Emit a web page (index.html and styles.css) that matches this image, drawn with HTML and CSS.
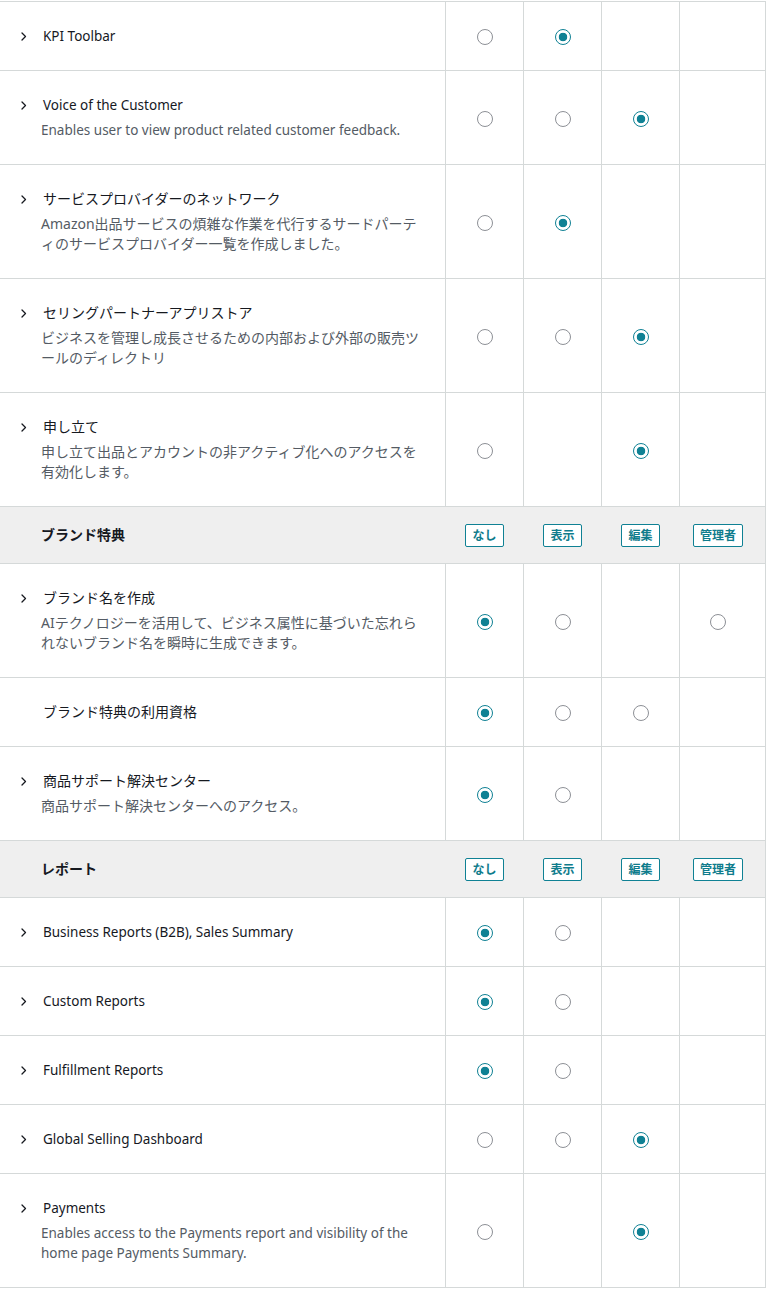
FILE: index.html
```html
<!DOCTYPE html>
<html lang="ja">
<head>
<meta charset="utf-8">
<title>権限</title>
<link rel="stylesheet" href="styles.css">
</head>
<body>
<div class="table">

  <div class="row">
    <div class="cell label"><div class="title"><svg class="chev" viewBox="0 0 6 9"><path d="M1 1 L4.5 4.5 L1 8"/></svg><span lang="en">KPI Toolbar</span></div></div>
    <div class="cell opt"><span class="radio"></span></div>
    <div class="cell opt"><span class="radio on"></span></div>
    <div class="cell opt"></div>
    <div class="cell opt last"></div>
  </div>

  <div class="row">
    <div class="cell label"><div class="title"><svg class="chev" viewBox="0 0 6 9"><path d="M1 1 L4.5 4.5 L1 8"/></svg><span lang="en">Voice of the Customer</span></div><div class="desc" lang="en">Enables user to view product related customer feedback.</div></div>
    <div class="cell opt"><span class="radio"></span></div>
    <div class="cell opt"><span class="radio"></span></div>
    <div class="cell opt"><span class="radio on"></span></div>
    <div class="cell opt last"></div>
  </div>

  <div class="row">
    <div class="cell label"><div class="title"><svg class="chev" viewBox="0 0 6 9"><path d="M1 1 L4.5 4.5 L1 8"/></svg><span>サービスプロバイダーのネットワーク</span></div><div class="desc">Amazon出品サービスの煩雑な作業を代行するサードパーティのサービスプロバイダー一覧を作成しました。</div></div>
    <div class="cell opt"><span class="radio"></span></div>
    <div class="cell opt"><span class="radio on"></span></div>
    <div class="cell opt"></div>
    <div class="cell opt last"></div>
  </div>

  <div class="row">
    <div class="cell label"><div class="title"><svg class="chev" viewBox="0 0 6 9"><path d="M1 1 L4.5 4.5 L1 8"/></svg><span>セリングパートナーアプリストア</span></div><div class="desc">ビジネスを管理し成長させるための内部および外部の販売ツールのディレクトリ</div></div>
    <div class="cell opt"><span class="radio"></span></div>
    <div class="cell opt"><span class="radio"></span></div>
    <div class="cell opt"><span class="radio on"></span></div>
    <div class="cell opt last"></div>
  </div>

  <div class="row">
    <div class="cell label"><div class="title"><svg class="chev" viewBox="0 0 6 9"><path d="M1 1 L4.5 4.5 L1 8"/></svg><span>申し立て</span></div><div class="desc">申し立て出品とアカウントの非アクティブ化へのアクセスを有効化します。</div></div>
    <div class="cell opt"><span class="radio"></span></div>
    <div class="cell opt"></div>
    <div class="cell opt"><span class="radio on"></span></div>
    <div class="cell opt last"></div>
  </div>

  <div class="row head">
    <div class="cell label"><div class="group">ブランド特典</div></div>
    <div class="cell opt"><span class="badge">なし</span></div>
    <div class="cell opt"><span class="badge">表示</span></div>
    <div class="cell opt"><span class="badge">編集</span></div>
    <div class="cell opt last"><span class="badge">管理者</span></div>
  </div>

  <div class="row">
    <div class="cell label"><div class="title"><svg class="chev" viewBox="0 0 6 9"><path d="M1 1 L4.5 4.5 L1 8"/></svg><span>ブランド名を作成</span></div><div class="desc">AIテクノロジーを活用して、ビジネス属性に基づいた忘れられないブランド名を瞬時に生成できます。</div></div>
    <div class="cell opt"><span class="radio on"></span></div>
    <div class="cell opt"><span class="radio"></span></div>
    <div class="cell opt"></div>
    <div class="cell opt last"><span class="radio"></span></div>
  </div>

  <div class="row">
    <div class="cell label"><div class="title plain"><span>ブランド特典の利用資格</span></div></div>
    <div class="cell opt"><span class="radio on"></span></div>
    <div class="cell opt"><span class="radio"></span></div>
    <div class="cell opt"><span class="radio"></span></div>
    <div class="cell opt last"></div>
  </div>

  <div class="row">
    <div class="cell label"><div class="title"><svg class="chev" viewBox="0 0 6 9"><path d="M1 1 L4.5 4.5 L1 8"/></svg><span>商品サポート解決センター</span></div><div class="desc">商品サポート解決センターへのアクセス。</div></div>
    <div class="cell opt"><span class="radio on"></span></div>
    <div class="cell opt"><span class="radio"></span></div>
    <div class="cell opt"></div>
    <div class="cell opt last"></div>
  </div>

  <div class="row head">
    <div class="cell label"><div class="group">レポート</div></div>
    <div class="cell opt"><span class="badge">なし</span></div>
    <div class="cell opt"><span class="badge">表示</span></div>
    <div class="cell opt"><span class="badge">編集</span></div>
    <div class="cell opt last"><span class="badge">管理者</span></div>
  </div>

  <div class="row">
    <div class="cell label"><div class="title"><svg class="chev" viewBox="0 0 6 9"><path d="M1 1 L4.5 4.5 L1 8"/></svg><span lang="en">Business Reports (B2B), Sales Summary</span></div></div>
    <div class="cell opt"><span class="radio on"></span></div>
    <div class="cell opt"><span class="radio"></span></div>
    <div class="cell opt"></div>
    <div class="cell opt last"></div>
  </div>

  <div class="row">
    <div class="cell label"><div class="title"><svg class="chev" viewBox="0 0 6 9"><path d="M1 1 L4.5 4.5 L1 8"/></svg><span lang="en">Custom Reports</span></div></div>
    <div class="cell opt"><span class="radio on"></span></div>
    <div class="cell opt"><span class="radio"></span></div>
    <div class="cell opt"></div>
    <div class="cell opt last"></div>
  </div>

  <div class="row">
    <div class="cell label"><div class="title"><svg class="chev" viewBox="0 0 6 9"><path d="M1 1 L4.5 4.5 L1 8"/></svg><span lang="en">Fulfillment Reports</span></div></div>
    <div class="cell opt"><span class="radio on"></span></div>
    <div class="cell opt"><span class="radio"></span></div>
    <div class="cell opt"></div>
    <div class="cell opt last"></div>
  </div>

  <div class="row">
    <div class="cell label"><div class="title"><svg class="chev" viewBox="0 0 6 9"><path d="M1 1 L4.5 4.5 L1 8"/></svg><span lang="en">Global Selling Dashboard</span></div></div>
    <div class="cell opt"><span class="radio"></span></div>
    <div class="cell opt"><span class="radio"></span></div>
    <div class="cell opt"><span class="radio on"></span></div>
    <div class="cell opt last"></div>
  </div>

  <div class="row">
    <div class="cell label"><div class="title"><svg class="chev" viewBox="0 0 6 9"><path d="M1 1 L4.5 4.5 L1 8"/></svg><span lang="en">Payments</span></div><div class="desc" lang="en">Enables access to the Payments report and visibility of the home page Payments Summary.</div></div>
    <div class="cell opt"><span class="radio"></span></div>
    <div class="cell opt"></div>
    <div class="cell opt"><span class="radio on"></span></div>
    <div class="cell opt last"></div>
  </div>

</div>
</body>
</html>
```

FILE: styles.css
```css
* { box-sizing: border-box; }

html, body {
  margin: 0;
  padding: 0;
  background: #ffffff;
}

body {
  padding-top: 1px;
  font-family: "Noto Sans", "Noto Sans CJK JP", sans-serif;
  font-size: 14px;
  color: #16191f;
}

.table {
  width: 766px;
  border-top: 1px solid #d5d9d9;
}

.row {
  display: grid;
  grid-template-columns: 446px 78px 78px 78px 86px;
  border-bottom: 1px solid #d5d9d9;
}

.cell {
  border-right: 1px solid #d5d9d9;
}

.label {
  padding: 24px 24px 24px 21px;
}

.opt {
  display: flex;
  align-items: center;
  justify-content: center;
  padding-top: 2px;
}

.opt.last {
  padding-right: 9px;
}

.title {
  display: flex;
  align-items: center;
  height: 20px;
  line-height: 20px;
  color: #16191f;
}

.title.plain {
  padding-left: 22px;
}

.chev {
  width: 6px;
  height: 9px;
  margin-right: 16px;
  flex: none;
}

.chev path {
  fill: none;
  stroke: #16191f;
  stroke-width: 1.3;
  stroke-linecap: round;
  stroke-linejoin: round;
}

.desc {
  margin-top: 5px;
  padding-left: 20px;
  line-height: 20px;
  color: #545b64;
}

:lang(en) {
  font-size: 13.5px;
}

.radio {
  display: block;
  width: 16px;
  height: 16px;
  border-radius: 50%;
  border: 1.5px solid #8d9096;
  background: #ffffff;
}

.radio.on {
  border-color: #0f8194;
  background: radial-gradient(circle, #0f8194 0 4px, #ffffff 4.6px);
}

.head {
  background: #efefef;
}

.head .cell {
  border-right-color: transparent;
}

.head .cell.last {
  border-right-color: #d5d9d9;
}

.head .label {
  padding-top: 18px;
  padding-bottom: 18px;
}

.head .opt {
  padding-top: 0;
}

.group {
  padding-left: 20px;
  line-height: 20px;
  font-weight: 700;
  color: #16191f;
}

.badge {
  display: block;
  height: 23px;
  padding: 0 6px;
  line-height: 21px;
  border: 1.5px solid #0f8194;
  border-radius: 2px;
  background: #ffffff;
  color: #0f7c8c;
  font-size: 12px;
  font-weight: 700;
}
```
